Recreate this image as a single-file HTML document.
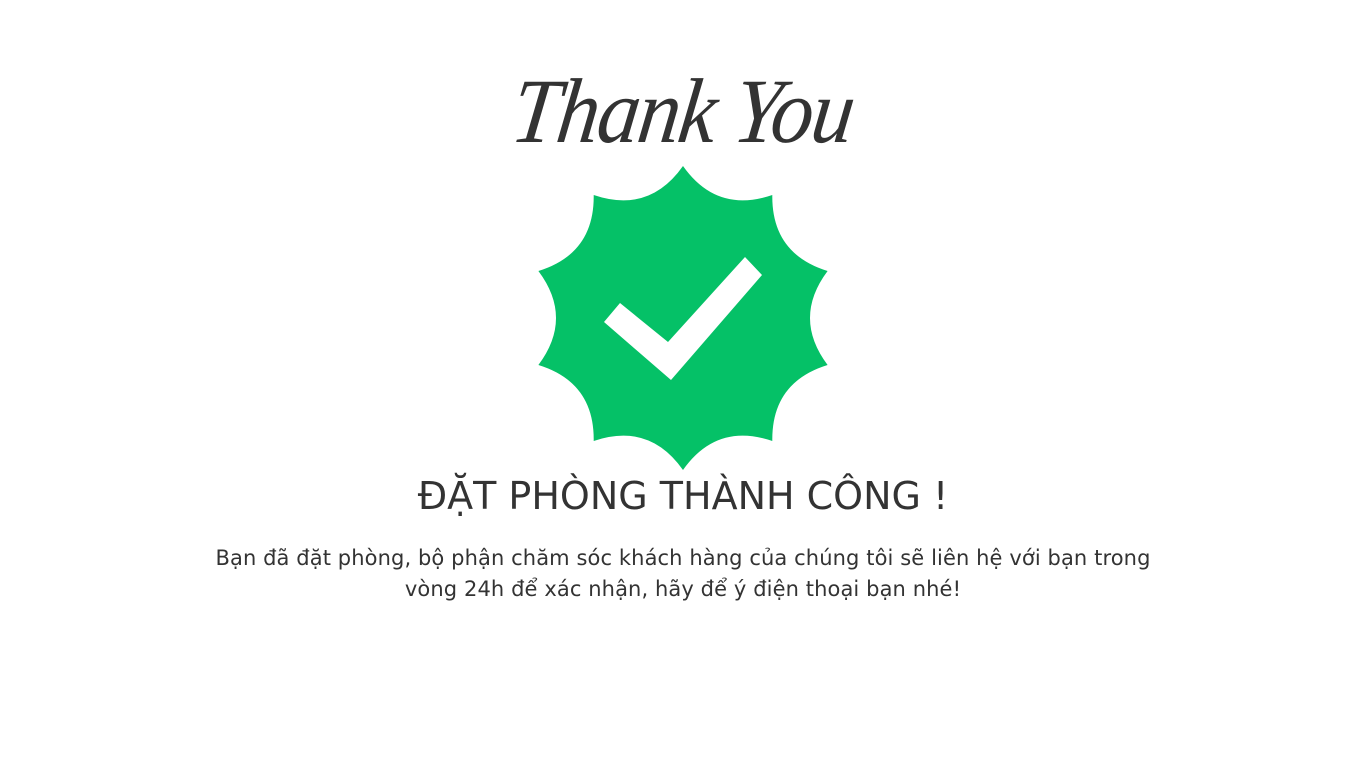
<!DOCTYPE html>
<html><head><meta charset="utf-8"><style>
html,body{margin:0;padding:0;background:#fff;width:1366px;height:768px;overflow:hidden;}
.ty{position:absolute;left:0;width:1366px;top:56px;text-align:center;font-family:"Liberation Serif",serif;font-style:italic;font-size:92px;color:#333;transform:scaleX(0.92) skewX(-8deg);letter-spacing:-2px;line-height:110px;}
h1{position:absolute;left:0;width:1366px;top:473px;margin:0;text-align:center;font-family:"DejaVu Sans","Liberation Sans",sans-serif;font-weight:normal;font-size:38px;color:#333;line-height:46px;letter-spacing:0px;}
p{position:absolute;left:100px;width:1166px;top:543px;margin:0;text-align:center;font-family:"DejaVu Sans","Liberation Sans",sans-serif;font-size:21px;line-height:31px;color:#333;letter-spacing:0.1px;}
</style></head><body>
<div class="ty">Thank You</div>
<svg width="1366" height="768" style="position:absolute;left:0;top:0">
<path fill="#05c167" d="M683,166 Q716.8,213.9 772.3,195 Q771.5,253.7 827.6,271 Q792.4,318 827.6,365 Q771.5,382.3 772.3,441 Q716.8,422.1 683,470 Q649.2,422.1 593.7,441 Q594.5,382.3 538.4,365 Q573.6,318 538.4,271 Q594.5,253.7 593.7,195 Q649.2,213.9 683,166Z"/>
<polygon fill="#fff" points="604,322 620,303 668,342 745,257 762,275 671,380"/>
</svg>
<h1>ĐẶT PHÒNG THÀNH CÔNG !</h1>
<p>Bạn đã đặt phòng, bộ phận chăm sóc khách hàng của chúng tôi sẽ liên hệ với bạn trong<br>vòng 24h để xác nhận, hãy để ý điện thoại bạn nhé!</p>
</body></html>
